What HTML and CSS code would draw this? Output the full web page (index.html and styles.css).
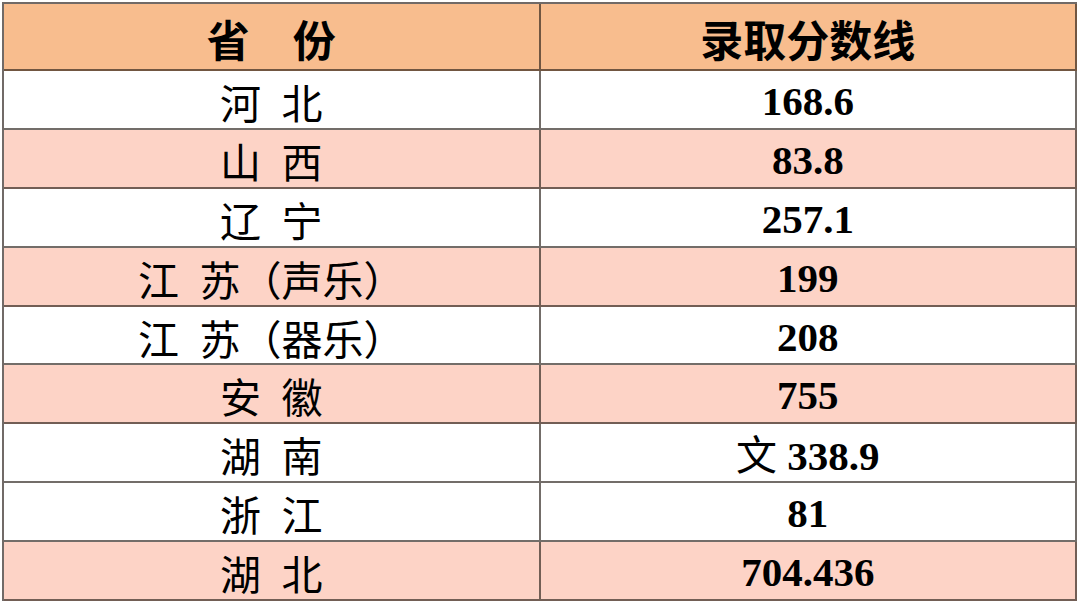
FILE: index.html
```html
<!DOCTYPE html>
<html lang="zh-CN">
<head>
<meta charset="utf-8">
<title>录取分数线</title>
<link rel="stylesheet" href="styles.css">
</head>
<body>
<table class="score-table">
  <colgroup><col class="col-half"><col class="col-half"></colgroup>
  <thead>
    <tr class="head-row">
      <th>省　份</th>
      <th>录取分数线</th>
    </tr>
  </thead>
  <tbody>
    <tr><td class="prov">河 北</td><td class="num">168.6</td></tr>
    <tr class="pink"><td class="prov">山 西</td><td class="num">83.8</td></tr>
    <tr><td class="prov">辽 宁</td><td class="num">257.1</td></tr>
    <tr class="pink"><td class="prov">江 苏（声乐）</td><td class="num">199</td></tr>
    <tr><td class="prov">江 苏（器乐）</td><td class="num">208</td></tr>
    <tr class="pink"><td class="prov">安 徽</td><td class="num">755</td></tr>
    <tr><td class="prov">湖 南</td><td class="num"><span class="cjk">文</span> 338.9</td></tr>
    <tr><td class="prov">浙 江</td><td class="num">81</td></tr>
    <tr class="pink"><td class="prov">湖 北</td><td class="num">704.436</td></tr>
  </tbody>
</table>
</body>
</html>
```

FILE: styles.css
```css
html, body {
  margin: 0;
  padding: 0;
  background: #ffffff;
}

body {
  width: 1080px;
  height: 603px;
  overflow: hidden;
}

.score-table {
  margin: 2px 0 0 2px;
  width: 1075px;
  table-layout: fixed;
  border-collapse: separate;
  border-spacing: 0;
  border-top: 2px solid #716a67;
  border-left: 2px solid #716a67;
}

.col-half {
  width: 50%;
}

.score-table th,
.score-table td {
  box-sizing: border-box;
  padding: 4px 0 0 0;
  text-align: center;
  vertical-align: middle;
  border-right: 2px solid rgba(40, 30, 25, 0.65);
  border-bottom: 2px solid rgba(40, 30, 25, 0.65);
  color: #000000;
  white-space: nowrap;
  line-height: 1;
}

.head-row {
  height: 67px;
  background: #f8bd8e;
}

.head-row th {
  font-family: "Noto Sans CJK SC", "Noto Sans", sans-serif;
  font-weight: 700;
  font-size: 43px;
}

.score-table tbody tr {
  height: 58.9px;
}

.pink {
  background: #fdd3c6;
}

.prov {
  font-family: "Noto Sans CJK SC", sans-serif;
  font-weight: 400;
  font-size: 41px;
  word-spacing: 0.28em;
}

.num {
  font-family: "Liberation Serif", "Times New Roman", serif;
  font-weight: 700;
  font-size: 41px;
}

.cjk {
  font-family: "Noto Sans CJK SC", sans-serif;
  font-weight: 400;
}
```
